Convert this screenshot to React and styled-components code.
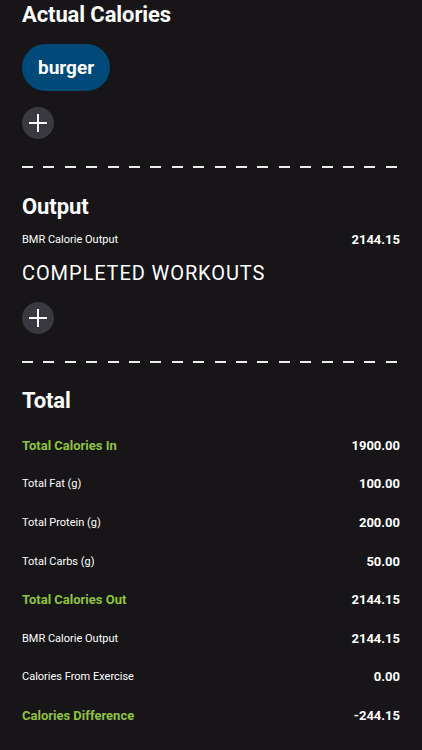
import React from 'react';
import styled, { createGlobalStyle } from 'styled-components';

const GlobalStyle = createGlobalStyle`
  html, body {
    margin: 0;
    padding: 0;
    background-color: #171517;
  }
  body {
    font-family: Roboto, "Liberation Sans", sans-serif;
    color: #ffffff;
  }
`;

const Screen = styled.div`
  width: 422px;
  min-height: 750px;
  box-sizing: border-box;
  padding: 0 22px;
  background-color: #171517;
  display: flex;
  flex-direction: column;
`;

const SectionTitle = styled.h2`
  margin: ${props => props.top || 0}px 0 0 0;
  font-size: 22px;
  line-height: 30px;
  font-weight: 700;
  letter-spacing: -0.1px;
`;

const FoodList = styled.div`
  display: flex;
  flex-wrap: wrap;
  gap: 10px;
  margin-top: 14px;
`;

const FoodPill = styled.div`
  height: 47px;
  padding: 0 16px;
  border-radius: 24px;
  background-color: #004a79;
  display: flex;
  align-items: center;
  font-size: 19px;
  font-weight: 700;
`;

const AddButton = styled.button`
  width: 32px;
  height: 32px;
  margin-top: ${props => props.top}px;
  padding: 0;
  border: none;
  border-radius: 50%;
  background-color: #3a393f;
  display: flex;
  align-items: center;
  justify-content: center;
  cursor: pointer;
`;

const Divider = styled.div`
  height: 2px;
  margin-top: 27px;
  background-image: repeating-linear-gradient(
    to right,
    #ececec 0,
    #ececec 11px,
    transparent 11px,
    transparent 21.4px
  );
`;

const Row = styled.div`
  height: ${props => props.height || 20}px;
  display: flex;
  align-items: center;
  justify-content: space-between;
  margin-top: ${props => props.top || 0}px;
`;

const Label = styled.span`
  font-size: ${props => (props.highlight ? 13 : 11)}px;
  font-weight: ${props => (props.highlight ? 700 : 400)};
  color: ${props => (props.highlight ? '#8fc33d' : '#ffffff')};
`;

const Value = styled.span`
  font-size: 13px;
  font-weight: 700;
  color: #ffffff;
`;

const SubHeading = styled.div`
  margin-top: 10px;
  font-size: 20px;
  line-height: 28px;
  font-weight: 400;
  letter-spacing: 0.9px;
`;

const Totals = styled.div`
  display: flex;
  flex-direction: column;
  margin-top: 10px;
`;

const PlusIcon = () => (
  <svg width="18" height="18" viewBox="0 0 18 18">
    <path d="M9 0v18M0 9h18" stroke="#ffffff" strokeWidth="2" fill="none" />
  </svg>
);

const totals = [
  { label: 'Total Calories In', value: '1900.00', highlight: true },
  { label: 'Total Fat (g)', value: '100.00' },
  { label: 'Total Protein (g)', value: '200.00' },
  { label: 'Total Carbs (g)', value: '50.00' },
  { label: 'Total Calories Out', value: '2144.15', highlight: true },
  { label: 'BMR Calorie Output', value: '2144.15' },
  { label: 'Calories From Exercise', value: '0.00' },
  { label: 'Calories Difference', value: '-244.15', highlight: true }
];

export default function App() {
  return (
    <Screen>
      <GlobalStyle />
      <SectionTitle>Actual Calories</SectionTitle>
      <FoodList>
        <FoodPill>burger</FoodPill>
      </FoodList>
      <AddButton top={16}>
        <PlusIcon />
      </AddButton>
      <Divider />

      <SectionTitle top={24}>Output</SectionTitle>
      <Row top={7}>
        <Label>BMR Calorie Output</Label>
        <Value>2144.15</Value>
      </Row>
      <SubHeading>COMPLETED WORKOUTS</SubHeading>
      <AddButton top={15}>
        <PlusIcon />
      </AddButton>
      <Divider />

      <SectionTitle top={23}>Total</SectionTitle>
      <Totals>
        {totals.map(item => (
          <Row key={item.label} height={38.6}>
            <Label highlight={item.highlight}>{item.label}</Label>
            <Value>{item.value}</Value>
          </Row>
        ))}
      </Totals>
    </Screen>
  );
}
